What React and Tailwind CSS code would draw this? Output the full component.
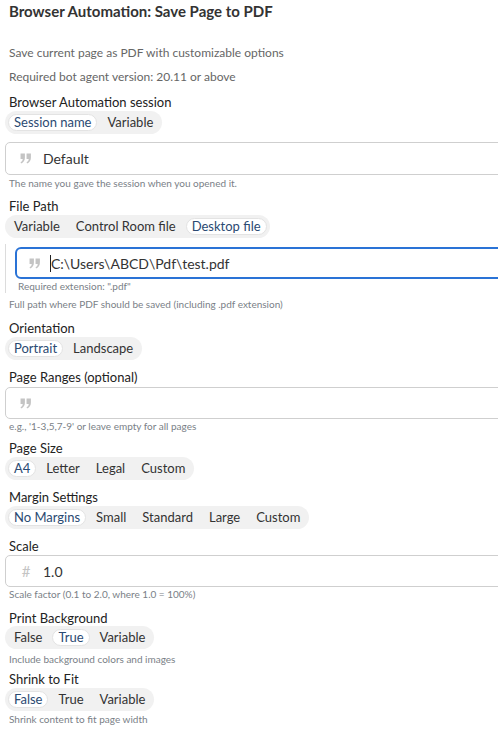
import React from 'react';

const font = { fontFamily: "Lato, 'Open Sans', sans-serif" };

const QuoteIcon = () => (
  <svg width="12" height="11" viewBox="0 0 22 20" fill="currentColor">
    <path d="M1 1h8v7c0 5-2 9-7 11l-1-2c2-1 4-3 4-6H1z" />
    <path d="M12 1h8v7c0 5-2 9-7 11l-1-2c2-1 4-3 4-6h-4z" />
  </svg>
);

const Label = ({ children, className = '' }) => (
  <div className={`pl-1 text-[13px] leading-4 text-[#222] ${className}`}>{children}</div>
);

const Help = ({ children, className = '' }) => (
  <div className={`pl-1 text-[10px] leading-3 text-[#7a7f87] ${className}`}>{children}</div>
);

const Segmented = ({ options, selected, className = 'mt-[1px]' }) => (
  <div className={`inline-flex items-center gap-1 self-start rounded-full bg-[#f1f1f1] p-[3px] ${className}`}>
    {options.map((o) => (
      <span
        key={o}
        className={`rounded-full px-[5px] text-[13px] leading-[15px] ${
          o === selected
            ? 'border border-[#e3e3e3] bg-white text-[#2b4a72]'
            : 'border border-transparent text-[#333]'
        }`}
      >
        {o}
      </span>
    ))}
  </div>
);

const TextInput = ({ icon, value, h = 'h-[32px]' }) => (
  <div className={`flex ${h} w-[540px] items-center rounded-[5px] border border-[#cfcfcf] bg-white`}>
    <span className="flex w-[37px] justify-center pl-[3px] text-[#c4c4c4]">{icon}</span>
    <span className="text-[14px] text-[#333]">{value}</span>
  </div>
);

export default function App() {
  return (
    <div className="h-[748px] w-[498px] overflow-hidden bg-white pl-[5px] pt-[2px]" style={font}>
      <div className="pl-1 text-[15px] font-bold leading-[18px] text-[#333]">Browser Automation: Save Page to PDF</div>
      <div className="mt-[25px] pl-1 text-[12px] leading-4 text-[#666]">Save current page as PDF with customizable options</div>
      <div className="mt-2 pl-1 text-[12px] leading-4 text-[#666]">Required bot agent version: 20.11 or above</div>

      <div className="mt-[9px] flex flex-col">
        <Label>Browser Automation session</Label>
        <Segmented options={['Session name', 'Variable']} selected="Session name" />
        <div className="mt-2">
          <TextInput icon={<QuoteIcon />} value="Default" h="h-[33px]" />
        </div>
        <Help className="mt-[2px]">The name you gave the session when you opened it.</Help>

        <Label className="mt-[9px]">File Path</Label>
        <Segmented options={['Variable', 'Control Room file', 'Desktop file']} selected="Desktop file" />
        <div className="mt-[6px] flex flex-col border-l border-[#dcdcdc] pb-[1px] pl-[9px] pt-[3px]">
          <div className="flex h-[32px] w-[540px] items-center rounded-[6px] border-2 border-[#2a73d6] bg-white">
            <span className="flex w-[33px] justify-center pl-[3px] text-[#c4c4c4]">
              <QuoteIcon />
            </span>
            <span className="h-[17px] w-px bg-[#222]" />
            <span className="text-[14px] text-[#333]">C:\Users\ABCD\Pdf\test.pdf</span>
          </div>
          <div className="mt-[1px] pl-[3px] text-[10px] leading-3 text-[#7a7f87]">Required extension: ".pdf"</div>
        </div>
        <Help className="mt-[5px]">Full path where PDF should be saved (including .pdf extension)</Help>

        <Label className="mt-[10px]">Orientation</Label>
        <Segmented options={['Portrait', 'Landscape']} selected="Portrait" />

        <Label className="mt-[9px]">Page Ranges (optional)</Label>
        <div className="mt-[2px]">
          <TextInput icon={<QuoteIcon />} value="" />
        </div>
        <Help className="mt-[1px]">e.g., '1-3,5,7-9' or leave empty for all pages</Help>

        <Label className="mt-[8px]">Page Size</Label>
        <Segmented options={['A4', 'Letter', 'Legal', 'Custom']} selected="A4" />

        <Label className="mt-[9px]">Margin Settings</Label>
        <Segmented options={['No Margins', 'Small', 'Standard', 'Large', 'Custom']} selected="No Margins" />

        <Label className="mt-[9px]">Scale</Label>
        <div className="mt-[1px]">
          <TextInput icon={<span className="text-[15px] leading-none">#</span>} value="1.0" />
        </div>
        <Help className="mt-[1px]">Scale factor (0.1 to 2.0, where 1.0 = 100%)</Help>

        <Label className="mt-[10px]">Print Background</Label>
        <Segmented options={['False', 'True', 'Variable']} selected="True" className="mt-0" />
        <Help className="mt-[4px]">Include background colors and images</Help>

        <Label className="mt-[6px]">Shrink to Fit</Label>
        <Segmented options={['False', 'True', 'Variable']} selected="False" />
        <Help className="mt-[2px]">Shrink content to fit page width</Help>
      </div>
    </div>
  );
}
